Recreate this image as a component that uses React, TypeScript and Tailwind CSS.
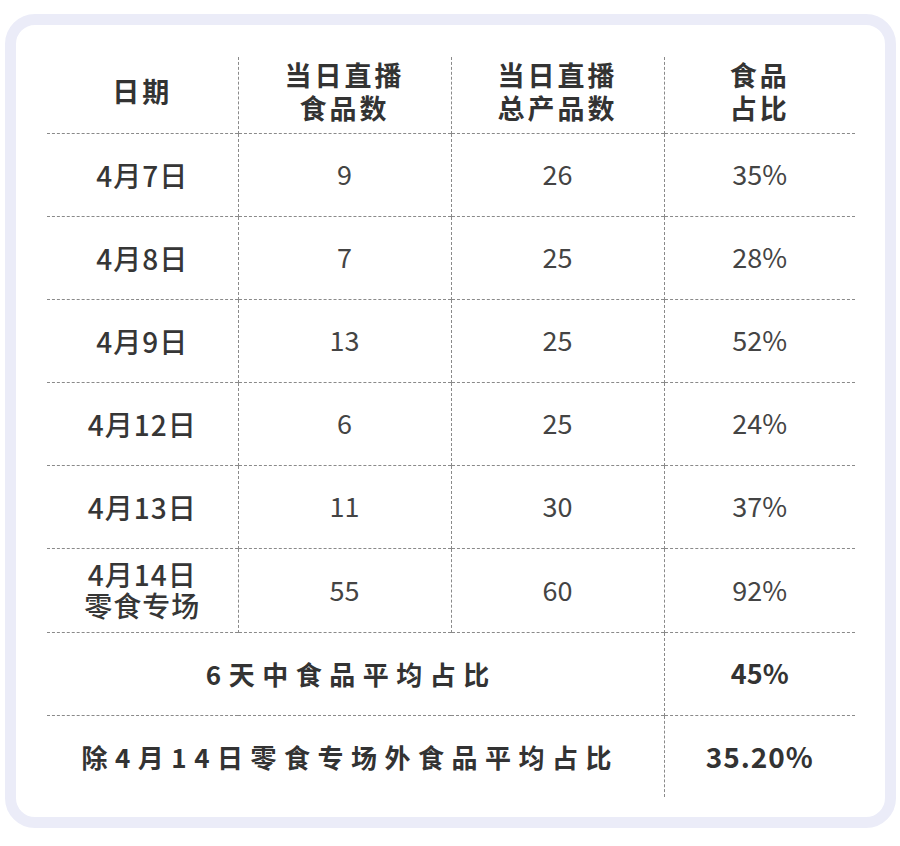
const rows = [
  { date: "4月7日", food: "9", total: "26", ratio: "35%" },
  { date: "4月8日", food: "7", total: "25", ratio: "28%" },
  { date: "4月9日", food: "13", total: "25", ratio: "52%" },
  { date: "4月12日", food: "6", total: "25", ratio: "24%" },
  { date: "4月13日", food: "11", total: "30", ratio: "37%" },
];

const font = { fontFamily: '"Noto Sans CJK SC", "Noto Sans", sans-serif' };

const line = "border-b border-dashed border-[#8a8a8a]";
const vline = "border-r border-dashed border-[#8a8a8a]";
const head = "text-[27px] font-bold tracking-[3px] leading-[33px] pb-[8px]";

export default function App() {
  return (
    <div className="w-[900px] h-[846px] bg-white pt-[14px] pl-[5px]" style={font}>
      <div className="w-[891px] h-[814px] rounded-[30px] border-[11px] border-[#ebecf8] bg-white pl-[31px] pt-[32px]">
        <table className="w-[808px] border-collapse text-[#333] table-fixed">
          <colgroup>
            <col className="w-[191px]" />
            <col className="w-[213px]" />
            <col className="w-[213px]" />
            <col className="w-[191px]" />
          </colgroup>
          <thead>
            <tr className={`h-[76px] ${line}`}>
              <th className={`${vline} ${head}`}>日期</th>
              <th className={`${vline} ${head}`}>
                当日直播
                <br />
                食品数
              </th>
              <th className={`${vline} ${head}`}>
                当日直播
                <br />
                总产品数
              </th>
              <th className={head}>
                食品
                <br />
                占比
              </th>
            </tr>
          </thead>
          <tbody className="text-center">
            {rows.map((r) => (
              <tr key={r.date} className={`h-[83px] ${line}`}>
                <td className={`${vline} text-[28px] font-medium tracking-[1px] text-[#363636]`}>{r.date}</td>
                <td className={`${vline} text-[27px] text-[#444]`}>{r.food}</td>
                <td className={`${vline} text-[27px] text-[#444]`}>{r.total}</td>
                <td className="text-[27px] text-[#444]">{r.ratio}</td>
              </tr>
            ))}
            <tr className={`h-[84px] ${line}`}>
              <td className={`${vline} text-[28px] font-medium tracking-[1px] leading-[31px] text-[#363636]`}>
                4月14日
                <br />
                零食专场
              </td>
              <td className={`${vline} text-[27px] text-[#444]`}>55</td>
              <td className={`${vline} text-[27px] text-[#444]`}>60</td>
              <td className="text-[27px] text-[#444]">92%</td>
            </tr>
            <tr className={`h-[83px] ${line}`}>
              <td colSpan={3} className={`${vline} text-[26px] font-bold tracking-[7.5px] pr-[8px]`}>
                6天中食品平均占比
              </td>
              <td className="text-[27px] font-bold">45%</td>
            </tr>
            <tr className="h-[82px]">
              <td colSpan={3} className={`${vline} text-[26px] font-bold tracking-[7.5px] pr-[10px]`}>
                除4月14日零食专场外食品平均占比
              </td>
              <td className="text-[28px] font-bold tracking-[1px]">35.20%</td>
            </tr>
          </tbody>
        </table>
      </div>
    </div>
  );
}
